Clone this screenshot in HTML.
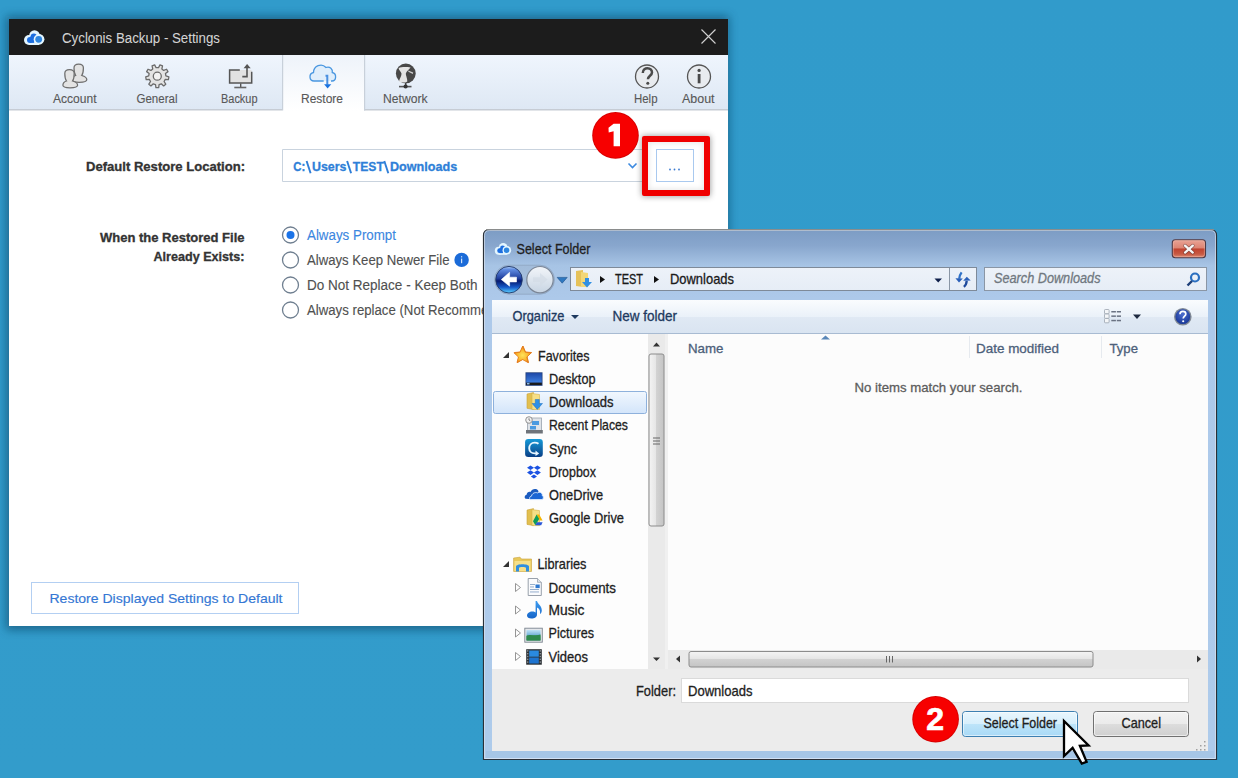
<!DOCTYPE html><html><head><meta charset="utf-8"><style>
html,body{margin:0;padding:0;background:#329ccb;overflow:hidden}
svg{display:block}
text{font-family:"Liberation Sans",sans-serif}
</style></head><body>
<svg width="1238" height="778" viewBox="0 0 1238 778">
<defs>
 <linearGradient id="bg" x1="0" y1="0" x2="0" y2="1">
  <stop offset="0" stop-color="#319bcb"/><stop offset="1" stop-color="#339ccb"/>
 </linearGradient>
 <filter id="shadow" x="-10%" y="-10%" width="120%" height="120%">
  <feGaussianBlur stdDeviation="5"/>
 </filter>
 <filter id="glow" x="-30%" y="-30%" width="160%" height="160%"><feGaussianBlur stdDeviation="0.35"/></filter>
 <filter id="sshadow" x="-30%" y="-30%" width="160%" height="160%">
  <feGaussianBlur stdDeviation="3"/>
 </filter>
 <linearGradient id="tb" x1="0" y1="0" x2="0" y2="1">
  <stop offset="0" stop-color="#eff5fd"/><stop offset="1" stop-color="#dee8f4"/>
 </linearGradient>
 <linearGradient id="tabsel" x1="0" y1="0" x2="0" y2="1">
  <stop offset="0" stop-color="#eef3fa"/><stop offset="1" stop-color="#ffffff"/>
 </linearGradient>
 <linearGradient id="frame" x1="0" y1="0" x2="0" y2="1">
  <stop offset="0" stop-color="#7c9cc4"/><stop offset="0.03" stop-color="#88a6cd"/><stop offset="0.068" stop-color="#a7c4e5"/><stop offset="0.13" stop-color="#adc9ea"/><stop offset="1" stop-color="#aecbeb"/>
 </linearGradient>
 <linearGradient id="dtb" x1="0" y1="0" x2="0" y2="1">
  <stop offset="0" stop-color="#fafcfe"/><stop offset="0.5" stop-color="#eaf1f9"/><stop offset="0.5" stop-color="#e0e9f4"/><stop offset="1" stop-color="#d9e4f1"/>
 </linearGradient>
 <linearGradient id="addr" x1="0" y1="0" x2="0" y2="1">
  <stop offset="0" stop-color="#edf2f9"/><stop offset="1" stop-color="#e6edf6"/>
 </linearGradient>
 <linearGradient id="selrow" x1="0" y1="0" x2="0" y2="1">
  <stop offset="0" stop-color="#f1f7fe"/><stop offset="1" stop-color="#d3e5fa"/>
 </linearGradient>
 <linearGradient id="btnblue" x1="0" y1="0" x2="0" y2="1">
  <stop offset="0" stop-color="#e9f6fd"/><stop offset="0.5" stop-color="#d6effc"/><stop offset="0.5" stop-color="#bde4f9"/><stop offset="1" stop-color="#a8d9f6"/>
 </linearGradient>
 <linearGradient id="btngray" x1="0" y1="0" x2="0" y2="1">
  <stop offset="0" stop-color="#f2f2f2"/><stop offset="0.5" stop-color="#ebebeb"/><stop offset="0.5" stop-color="#dddddd"/><stop offset="1" stop-color="#cfcfcf"/>
 </linearGradient>
 <linearGradient id="hthumb" x1="0" y1="0" x2="0" y2="1">
  <stop offset="0" stop-color="#f4f4f4"/><stop offset="0.45" stop-color="#e6e6e6"/><stop offset="0.5" stop-color="#d2d2d2"/><stop offset="1" stop-color="#c4c4c4"/>
 </linearGradient>
 <linearGradient id="vthumb" x1="0" y1="0" x2="1" y2="0">
  <stop offset="0" stop-color="#f4f4f4"/><stop offset="0.45" stop-color="#e6e6e6"/><stop offset="0.5" stop-color="#d2d2d2"/><stop offset="1" stop-color="#c4c4c4"/>
 </linearGradient>
 <radialGradient id="redball" cx="0.5" cy="0.35" r="0.65">
  <stop offset="0" stop-color="#f20d0d"/><stop offset="1" stop-color="#d40000"/>
 </radialGradient>
 <linearGradient id="closebtn" x1="0" y1="0" x2="0" y2="1">
  <stop offset="0" stop-color="#eaa395"/><stop offset="0.45" stop-color="#dd8574"/><stop offset="0.52" stop-color="#c04330"/><stop offset="0.8" stop-color="#c85a43"/><stop offset="1" stop-color="#e0907a"/>
 </linearGradient>
 <radialGradient id="backball" cx="0.5" cy="0.3" r="0.7">
  <stop offset="0" stop-color="#4f8fe6"/><stop offset="0.6" stop-color="#103f9e"/><stop offset="1" stop-color="#2a8ae6"/>
 </radialGradient>
 <radialGradient id="fwdball" cx="0.5" cy="0.3" r="0.7">
  <stop offset="0" stop-color="#eef3f8"/><stop offset="1" stop-color="#b9c8d8"/>
 </radialGradient>
 <radialGradient id="helpball" cx="0.5" cy="0.35" r="0.6">
  <stop offset="0" stop-color="#4d6fd0"/><stop offset="1" stop-color="#1b3a9a"/>
 </radialGradient>
</defs>
<rect x="0" y="0" width="1238" height="778" fill="url(#bg)"/>

<rect x="6" y="16" width="723" height="614" fill="#0c4466" opacity="0.6" filter="url(#shadow)"/>
<rect x="9" y="19" width="719" height="607" fill="#ffffff"/>
<rect x="9" y="19" width="719" height="36" fill="#1c1c1c"/>
<rect x="9" y="55" width="719" height="54" fill="url(#tb)"/>
<rect x="9" y="109" width="719" height="1.5" fill="#c6ccd4"/>
<rect x="282" y="55" width="82" height="56" fill="url(#tabsel)"/>
<rect x="282" y="55" width="1.2" height="55.5" fill="#c8d0da"/>
<rect x="364" y="55" width="1.2" height="55.5" fill="#c8d0da"/>
<text x="62" y="43" font-size="13.8" fill="#d4d4d4" stroke="#d4d4d4" stroke-width="0.05" textLength="158" lengthAdjust="spacingAndGlyphs">Cyclonis Backup - Settings</text>
<path d="M701.5 29.5 L715.5 43.5 M715.5 29.5 L701.5 43.5" stroke="#cfcfcf" stroke-width="1.15" fill="none"/>
<text x="53" y="102.8" font-size="12" fill="#585858" stroke="#585858" stroke-width="0.12" textLength="43.5" lengthAdjust="spacingAndGlyphs">Account</text>
<text x="136.5" y="102.8" font-size="12" fill="#585858" stroke="#585858" stroke-width="0.12" textLength="41" lengthAdjust="spacingAndGlyphs">General</text>
<text x="221" y="102.8" font-size="12" fill="#585858" stroke="#585858" stroke-width="0.12" textLength="36.5" lengthAdjust="spacingAndGlyphs">Backup</text>
<text x="301" y="102.8" font-size="12" fill="#585858" stroke="#585858" stroke-width="0.12" textLength="42" lengthAdjust="spacingAndGlyphs">Restore</text>
<text x="383" y="102.8" font-size="12" fill="#585858" stroke="#585858" stroke-width="0.12" textLength="44.5" lengthAdjust="spacingAndGlyphs">Network</text>
<text x="634" y="102.8" font-size="12" fill="#585858" stroke="#585858" stroke-width="0.12" textLength="23.5" lengthAdjust="spacingAndGlyphs">Help</text>
<text x="682" y="102.8" font-size="12" fill="#585858" stroke="#585858" stroke-width="0.12" textLength="32.5" lengthAdjust="spacingAndGlyphs">About</text>
<g filter="url(#glow)"><circle cx="29.00" cy="40.00" r="5.00" fill="#e4f6ff"/><circle cx="34.50" cy="35.50" r="5.30" fill="#e4f6ff"/><circle cx="39.00" cy="39.30" r="5.40" fill="#e4f6ff"/><rect x="29.00" y="39.00" width="10.00" height="6.00" fill="#e4f6ff"/><circle cx="30.00" cy="39.90" r="3.00" fill="#1f6ee0"/><circle cx="33.80" cy="36.60" r="3.10" fill="#1f6ee0"/><rect x="30.00" y="36.60" width="4.20" height="6.30" fill="#1f6ee0"/><circle cx="38.70" cy="39.30" r="5.00" fill="#e4f6ff"/><circle cx="38.70" cy="39.30" r="3.40" fill="#2f86e0"/></g>
<path transform="translate(9.2,-5.5)" d="M66.5 81 C65 79 64.8 76 64.8 73.5 C64.8 70.5 67 69.6 69.5 69.6 C72 69.6 74.2 70.5 74.2 73.5 C74.2 76 74 79 72.5 81 C75.5 81.8 77.6 83 77.6 85.3 C77.6 87.2 75 87.8 70 87.8 C65 87.8 62.9 87.2 62.9 85.3 C62.9 83 64 81.8 66.5 81 Z" fill="#e3e3e3" stroke="#6f6f6f" stroke-width="1.25"/>
<path transform="translate(0,0)" d="M66.5 81 C65 79 64.8 76 64.8 73.5 C64.8 70.5 67 69.6 69.5 69.6 C72 69.6 74.2 70.5 74.2 73.5 C74.2 76 74 79 72.5 81 C75.5 81.8 77.6 83 77.6 85.3 C77.6 87.2 75 87.8 70 87.8 C65 87.8 62.9 87.2 62.9 85.3 C62.9 83 64 81.8 66.5 81 Z" fill="#e3e3e3" stroke="#6f6f6f" stroke-width="1.25"/>
<path d="M159.09 84.61 L158.67 87.72 L155.93 87.72 L155.51 84.61 L153.26 83.79 L150.95 85.91 L148.84 84.14 L150.52 81.49 L149.33 79.42 L146.20 79.55 L145.72 76.85 L148.71 75.90 L149.12 73.54 L146.64 71.63 L148.01 69.25 L150.91 70.45 L152.74 68.91 L152.07 65.85 L154.65 64.91 L156.10 67.68 L158.50 67.68 L159.95 64.91 L162.53 65.85 L161.86 68.91 L163.69 70.45 L166.59 69.25 L167.96 71.63 L165.48 73.54 L165.89 75.90 L168.88 76.85 L168.40 79.55 L165.27 79.42 L164.08 81.49 L165.76 84.14 L163.65 85.91 L161.34 83.79 Z" fill="#e3e3e3" stroke="#6b6b6b" stroke-width="1.3" stroke-linejoin="round"/>
<circle cx="157.3" cy="76.2" r="4.0" fill="#f2f2f2" stroke="#6b6b6b" stroke-width="1.3"/>
<rect x="229.6" y="70" width="22" height="13.2" fill="#e2e2e2"/>
<path d="M239.8 70 L229.6 70 L229.6 83.1 L251.7 83.1 L251.7 71.8" fill="none" stroke="#555" stroke-width="1.5"/>
<path d="M242.3 76.6 L247 76.6 L247 67.6" fill="none" stroke="#555" stroke-width="1.6"/>
<path d="M243.6 68.2 L247.1 64 L250.7 68.2 Z" fill="#555"/>
<rect x="240" y="83.5" width="1.4" height="3.6" fill="#555"/><rect x="234.3" y="86.7" width="12" height="1.6" fill="#666"/>
<path d="M323.7 81 L314 81 C309 81 308.5 73.5 313.5 72.5 C313.5 66 321.5 62.5 326 67.5 C330 66 333 69.5 332.3 72.5 C337 73.5 336.5 81 332 81 L331 81" fill="#e0eefb" stroke="#4a97e0" stroke-width="1.3"/>
<path d="M325.5 75.8 L327.3 75.8 L327.3 84.8" fill="none" stroke="#4a90e0" stroke-width="2"/>
<path d="M324.1 84.3 L331.3 84.3 L327.6 88.4 Z" fill="#1a73e0"/>
<circle cx="405.8" cy="73.4" r="9.9" fill="#484848"/>
<path d="M398.6 68.2 C401 67 406 66.8 410.6 67.6 C409.5 69.5 406.5 71 405.8 73.6 C405.6 75.5 407.5 78.5 407.3 81.4 C405 83 401.5 83 399 81.4 C399.5 78.5 401.8 76 401.5 73.6 C401 71.5 399 70.5 398.6 68.2 Z" fill="#e4e4e4"/>
<path d="M408.2 70.4 L413.2 72.6 L412.8 73.9 L408.4 71.7 Z" fill="#cfcfcf"/>
<rect x="404.9" y="83" width="1.6" height="3" fill="#444"/><rect x="399" y="85.8" width="12.5" height="1.6" fill="#555"/><circle cx="405.6" cy="86.5" r="2.1" fill="#333"/>
<circle cx="647" cy="76.5" r="11.5" fill="#e8ebef" stroke="#555" stroke-width="1.3"/>
<path d="M642.8 73 C642.8 69.6 645.6 68.2 647.4 68.2 C650.2 68.2 652 70 652 72.4 C652 75.6 647.9 75.9 647.9 79.3" fill="none" stroke="#4a4a4a" stroke-width="2.5"/>
<circle cx="647.8" cy="83.3" r="1.5" fill="#4a4a4a"/>
<circle cx="699" cy="76.5" r="11.5" fill="#e8ebef" stroke="#555" stroke-width="1.3"/>
<rect x="697.7" y="74" width="2.8" height="9.3" fill="#4a4a4a"/><circle cx="699.1" cy="70.4" r="1.6" fill="#4a4a4a"/>
<text x="86" y="171" font-size="13" fill="#333333" stroke="#333333" stroke-width="0.32" font-weight="bold" textLength="159" lengthAdjust="spacingAndGlyphs">Default Restore Location:</text>
<path d="M642 149.5 H282.5 V181.5 H642" fill="#fff" stroke="#c9d3de"/>
<text x="293.2" y="171" font-size="13" fill="#2f7fd8" stroke="#2f7fd8" stroke-width="0.32" font-weight="bold" textLength="12" lengthAdjust="spacingAndGlyphs">C:</text>
<text x="312" y="171" font-size="13" fill="#2f7fd8" stroke="#2f7fd8" stroke-width="0.32" font-weight="bold" textLength="34.5" lengthAdjust="spacingAndGlyphs">Users</text>
<text x="352.8" y="171" font-size="13" fill="#2f7fd8" stroke="#2f7fd8" stroke-width="0.32" font-weight="bold" textLength="31" lengthAdjust="spacingAndGlyphs">TEST</text>
<text x="390" y="171" font-size="13" fill="#2f7fd8" stroke="#2f7fd8" stroke-width="0.32" font-weight="bold" textLength="67.2" lengthAdjust="spacingAndGlyphs">Downloads</text>
<path d="M306.6 161 L310.6 173.2" stroke="#2f7fd8" stroke-width="1.9"/>
<path d="M347.1 161 L351.1 173.2" stroke="#2f7fd8" stroke-width="1.9"/>
<path d="M384.3 161 L388.3 173.2" stroke="#2f7fd8" stroke-width="1.9"/>
<path d="M628.5 163.5 L632.5 167.5 L636.5 163.5" stroke="#3d8ae0" stroke-width="1.6" fill="none"/>
<rect x="642" y="136" width="68" height="60" fill="#000" fill-opacity="0.32" filter="url(#sshadow)"/>
<rect x="648" y="142" width="56" height="48" fill="#fff"/>
<path d="M642 136 H710 V196 H642 Z M648 142 V190 H704 V142 Z" fill="#000" fill-opacity="0.12" fill-rule="evenodd" filter="url(#sshadow)"/>
<rect x="656.5" y="149.5" width="37" height="32" fill="#fff" stroke="#a9c9ef"/>
<circle cx="670" cy="169.5" r="0.9" fill="#3a7ad0"/><circle cx="674.5" cy="169.5" r="0.9" fill="#3a7ad0"/><circle cx="679" cy="169.5" r="0.9" fill="#3a7ad0"/>
<path d="M644 136 H708 Q710 136 710 138 V194 Q710 196 708 196 H644 Q642 196 642 194 V138 Q642 136 644 136 Z M648 142 V190 H704 V142 Z" fill="#f00000" fill-rule="evenodd"/>
<circle cx="615.5" cy="135.4" r="23.3" fill="#d80000"/>
<circle cx="615.5" cy="135.4" r="22.3" fill="#f70000"/>
<path d="M613.6 123.8 L620 123.8 L620 146.2 L613.6 146.2 L613.6 131.2 L608.7 132.6 L608.5 127.8 Z" fill="#ffffff"/>
<text x="100" y="242" font-size="13" fill="#333333" stroke="#333333" stroke-width="0.32" font-weight="bold" textLength="144.5" lengthAdjust="spacingAndGlyphs">When the Restored File</text>
<text x="153.5" y="261" font-size="13" fill="#333333" stroke="#333333" stroke-width="0.32" font-weight="bold" textLength="91" lengthAdjust="spacingAndGlyphs">Already Exists:</text>
<circle cx="290.5" cy="235" r="8" fill="#fff" stroke="#6f7f90" stroke-width="1.3"/>
<circle cx="290.5" cy="260" r="8" fill="#fff" stroke="#6f7f90" stroke-width="1.3"/>
<circle cx="290.5" cy="285" r="8" fill="#fff" stroke="#6f7f90" stroke-width="1.3"/>
<circle cx="290.5" cy="310" r="8" fill="#fff" stroke="#6f7f90" stroke-width="1.3"/>
<circle cx="290.5" cy="235" r="4" fill="#1a73e8"/>
<text x="307" y="240.2" font-size="13.8" fill="#3b86e0" stroke="#3b86e0" stroke-width="0.12" textLength="89" lengthAdjust="spacingAndGlyphs">Always Prompt</text>
<text x="307" y="265.2" font-size="13.8" fill="#505050" stroke="#505050" stroke-width="0.12" textLength="142.5" lengthAdjust="spacingAndGlyphs">Always Keep Newer File</text>
<circle cx="461.6" cy="259.9" r="7.2" fill="#1b6bd8"/>
<rect x="461" y="258.6" width="1.2" height="4.6" fill="#cfe2fa"/><rect x="461" y="256.2" width="1.2" height="1.2" fill="#cfe2fa"/>
<text x="307" y="290.2" font-size="13.8" fill="#505050" stroke="#505050" stroke-width="0.12" textLength="170.5" lengthAdjust="spacingAndGlyphs">Do Not Replace - Keep Both</text>
<text x="307" y="315.2" font-size="13.8" fill="#505050" stroke="#505050" stroke-width="0.12" textLength="215" lengthAdjust="spacingAndGlyphs">Always replace (Not Recommended)</text>
<rect x="31.5" y="582.5" width="267" height="31" fill="#fff" stroke="#b3cff2"/>
<text x="49.5" y="603" font-size="13.6" fill="#3577d4" stroke="#3577d4" stroke-width="0.15" textLength="233" lengthAdjust="spacingAndGlyphs">Restore Displayed Settings to Default</text>
<path d="M483.5 759.5 L483.5 235.5 Q483.5 229.5 489.5 229.5 L1210.5 229.5 Q1216.5 229.5 1216.5 235.5 L1216.5 759.5 Z" fill="url(#frame)" stroke="#2a3038" stroke-width="1.2"/>
<path d="M484.5 758.5 L484.5 235.5 Q484.5 230.5 489.5 230.5 L1210.5 230.5 Q1215.5 230.5 1215.5 235.5 L1215.5 758.5 Z" fill="none" stroke="#eef4fb" stroke-opacity="0.55" stroke-width="1"/>
<path d="M486 229.6 L1214 229.6" stroke="#8a8c8c" stroke-width="1.3"/>
<rect x="486" y="751" width="728" height="7" fill="#a6c6e6"/>
<g filter="url(#glow)"><circle cx="498.80" cy="250.80" r="4.00" fill="#e4f6ff"/><circle cx="503.20" cy="247.20" r="4.24" fill="#e4f6ff"/><circle cx="506.80" cy="250.24" r="4.32" fill="#e4f6ff"/><rect x="498.80" y="250.00" width="8.00" height="4.80" fill="#e4f6ff"/><circle cx="499.60" cy="250.72" r="2.40" fill="#1f6ee0"/><circle cx="502.64" cy="248.08" r="2.48" fill="#1f6ee0"/><rect x="499.60" y="248.08" width="3.36" height="5.04" fill="#1f6ee0"/><circle cx="506.56" cy="250.24" r="4.00" fill="#e4f6ff"/><circle cx="506.56" cy="250.24" r="2.72" fill="#2f86e0"/></g>
<text x="516.5" y="253.5" font-size="13.8" fill="#1e1e1e" stroke="#1e1e1e" stroke-width="0.3" textLength="74" lengthAdjust="spacingAndGlyphs">Select Folder</text>
<rect x="1172.3" y="239.7" width="33.2" height="18" rx="3" fill="url(#closebtn)" stroke="#4e3a46" stroke-width="1.1"/>
<rect x="1173.4" y="240.8" width="31" height="15.8" rx="2" fill="none" stroke="#f3c0b4" stroke-opacity="0.55" stroke-width="0.8"/>
<path d="M1185 245.6 L1192.8 252.6 M1192.8 245.6 L1185 252.6" stroke="#4a2a2a" stroke-width="3.6" stroke-opacity="0.55" stroke-linecap="round"/>
<path d="M1185 245.6 L1192.8 252.6 M1192.8 245.6 L1185 252.6" stroke="#f6f6f6" stroke-width="2.3" stroke-linecap="round"/>
<linearGradient id="backg" x1="0" y1="0" x2="0" y2="1"><stop offset="0" stop-color="#a9c8f4"/><stop offset="0.12" stop-color="#5f8ae0"/><stop offset="0.45" stop-color="#21409e"/><stop offset="0.55" stop-color="#061a70"/><stop offset="0.78" stop-color="#1659c8"/><stop offset="1" stop-color="#5fd4ff"/></linearGradient>
<linearGradient id="fwdg" x1="0" y1="0" x2="0" y2="1"><stop offset="0" stop-color="#f2f5f9"/><stop offset="0.5" stop-color="#dde5ee"/><stop offset="1" stop-color="#c8d5e3"/></linearGradient>
<path d="M509 265.2 L540 265.2 A14.5 14.5 0 0 1 540 294.2 L509 294.2 A14.5 14.5 0 0 1 509 265.2 Z" fill="#9fb6d1" fill-opacity="0.55" stroke="#8aa0ba" stroke-opacity="0.7"/>
<circle cx="509" cy="279.7" r="13.3" fill="url(#backg)" stroke="#1f3766" stroke-width="0.9"/>
<path d="M501.3 279.6 L509.6 272.3 L509.6 277.2 L516.5 277.2 L516.5 281.9 L509.6 281.9 L509.6 286.2 Z" fill="#ffffff" stroke="#ffffff" stroke-width="0.6" stroke-linejoin="round"/>
<circle cx="540" cy="279.7" r="13.2" fill="url(#fwdg)" stroke="#7b8696" stroke-width="1.2"/>
<path d="M547.5 279.6 L540 273 L540 277.2 L533 277.2 L533 281.9 L540 281.9 L540 286.2 Z" fill="#d3dce6" fill-opacity="0.7"/>
<path d="M557.2 277.4 L567.2 277.4 L562.2 283.2 Z" fill="#2f78c0" stroke="#1d4f8a" stroke-width="0.6" stroke-linejoin="round"/>
<rect x="570.5" y="267.5" width="406" height="23" fill="url(#addr)" stroke="#7e8a99"/>
<rect x="949" y="268" width="1" height="22" fill="#8a96a5"/>
<path d="M576 271 L583 270 L583 287 L576 286 Z" fill="#e6c25a"/><path d="M581 272 L588 273 L588 287 L581 287 Z" fill="#f3d777"/><path d="M585 278 L589 278 L589 282 L592 282 L587 287.5 L582 282 L585 282 Z" fill="#2f8fe3"/>
<path d="M600 276 L605 279.5 L600 283 Z" fill="#111"/>
<text x="615" y="283.5" font-size="13.9" fill="#1a1a1a" stroke="#1a1a1a" stroke-width="0.3" textLength="28" lengthAdjust="spacingAndGlyphs">TEST</text>
<path d="M654 276 L659 279.5 L654 283 Z" fill="#111"/>
<text x="670" y="283.5" font-size="13.9" fill="#1a1a1a" stroke="#1a1a1a" stroke-width="0.3" textLength="64" lengthAdjust="spacingAndGlyphs">Downloads</text>
<path d="M934.5 278.5 L942 278.5 L938.2 282.5 Z" fill="#0e1f4a"/>
<path d="M961.6 272.4 C960.2 274.3 959.3 276.3 959.2 278.8" stroke="#2f72c8" stroke-width="2.3" fill="none"/>
<path d="M955.4 278.2 L962.8 278.4 L959 282.6 Z" fill="#2a5fb8"/>
<path d="M966.7 280.8 C966.6 283.3 965.6 285.4 963.9 286.8" stroke="#1f4a9c" stroke-width="2.3" fill="none"/>
<path d="M963.2 280.7 L970.7 280.6 L966.8 276.8 Z" fill="#2a5fb8"/>
<rect x="984.5" y="267.5" width="222" height="23" fill="url(#addr)" stroke="#8a96a5"/>
<text x="994" y="283" font-size="13.9" fill="#707880" stroke="#707880" stroke-width="0.3" font-style="italic" textLength="106.5" lengthAdjust="spacingAndGlyphs">Search Downloads</text>
<circle cx="1195" cy="277.5" r="4" fill="none" stroke="#2a6fc0" stroke-width="2.2"/><path d="M1192 281 L1187.5 285.5" stroke="#1d3f78" stroke-width="2.4"/>
<rect x="492" y="300" width="716" height="34" fill="url(#dtb)"/>
<rect x="492" y="333" width="716" height="1" fill="#a8bbd2"/>
<text x="512.5" y="321" font-size="13.9" fill="#1e3a5f" stroke="#1e3a5f" stroke-width="0.3" textLength="52" lengthAdjust="spacingAndGlyphs">Organize</text>
<path d="M571 315 L579 315 L575 319 Z" fill="#1e3a5f"/>
<text x="612.5" y="321" font-size="13.9" fill="#1e3a5f" stroke="#1e3a5f" stroke-width="0.3" textLength="64.5" lengthAdjust="spacingAndGlyphs">New folder</text>
<rect x="1104.5" y="309.5" width="4.6" height="4.3" rx="0.8" fill="#f4f6f8" stroke="#9aa3ae" stroke-width="0.8"/>
<rect x="1104.5" y="314" width="4.6" height="4.3" rx="0.8" fill="#f4f6f8" stroke="#9aa3ae" stroke-width="0.8"/>
<rect x="1104.5" y="318.5" width="4.6" height="4.3" rx="0.8" fill="#f4f6f8" stroke="#9aa3ae" stroke-width="0.8"/>
<rect x="1111.3" y="311.0" width="4.6" height="1.5" fill="#6a7282"/><rect x="1116.8" y="311.0" width="4.2" height="1.5" fill="#6a7282"/>
<rect x="1111.3" y="315.4" width="4.6" height="1.5" fill="#6a7282"/><rect x="1116.8" y="315.4" width="4.2" height="1.5" fill="#6a7282"/>
<rect x="1111.3" y="319.8" width="4.6" height="1.5" fill="#6a7282"/><rect x="1116.8" y="319.8" width="4.2" height="1.5" fill="#6a7282"/>
<path d="M1133 314.4 L1141 314.4 L1137 319 Z" fill="#1e2a40"/>
<circle cx="1182.8" cy="316.7" r="8.8" fill="#7f8894"/>
<circle cx="1182.8" cy="316.7" r="7.4" fill="url(#helpball)"/>
<path d="M1180 314.2 C1180 312.2 1181.4 311.3 1182.9 311.3 C1184.6 311.3 1185.8 312.4 1185.8 313.9 C1185.8 316 1183.2 316.2 1183.2 318.6" fill="none" stroke="#fff" stroke-width="1.7"/>
<circle cx="1183.2" cy="321.2" r="1.05" fill="#fff"/>
<rect x="492" y="334" width="716" height="335" fill="#ffffff"/>
<rect x="492" y="334" width="156" height="335" fill="#fdfdfd"/>
<rect x="648" y="334" width="17" height="335" fill="#eaeaea"/>
<rect x="649" y="354" width="15" height="172" rx="2" fill="url(#vthumb)" stroke="#8c8c8c" stroke-width="1"/>
<rect x="653" y="437.5" width="7" height="1" fill="#666"/>
<rect x="653" y="440.5" width="7" height="1" fill="#666"/>
<rect x="653" y="443.5" width="7" height="1" fill="#666"/>
<path d="M653 346.5 L660 346.5 L656.5 342.5 Z" fill="#333"/>
<path d="M653 657.5 L660 657.5 L656.5 661 Z" fill="#333"/>
<rect x="665" y="334" width="3" height="335" fill="#f0f0f0"/>
<rect x="668" y="334" width="540" height="335" fill="#fcfcfc"/>
<text x="688" y="352.8" font-size="13.6" fill="#4c607a" stroke="#4c607a" stroke-width="0.3" textLength="35.5" lengthAdjust="spacingAndGlyphs">Name</text>
<path d="M821 339.5 L825.5 335.5 L830 339.5 Z" fill="#5a87b8"/>
<rect x="969" y="336" width="1" height="22" fill="#e6eaef"/><rect x="1101" y="336" width="1" height="22" fill="#e6eaef"/>
<text x="976" y="352.8" font-size="13.6" fill="#4c607a" stroke="#4c607a" stroke-width="0.3" textLength="83" lengthAdjust="spacingAndGlyphs">Date modified</text>
<text x="1109.5" y="352.8" font-size="13.6" fill="#4c607a" stroke="#4c607a" stroke-width="0.3" textLength="28.5" lengthAdjust="spacingAndGlyphs">Type</text>
<text x="854.5" y="391.5" font-size="13.6" fill="#5d5d5d" stroke="#5d5d5d" stroke-width="0.3" textLength="168" lengthAdjust="spacingAndGlyphs">No items match your search.</text>
<rect x="668" y="650" width="540" height="19" fill="#eaeaea"/>
<rect x="689" y="651.5" width="404" height="15.5" rx="2" fill="url(#hthumb)" stroke="#8c8c8c" stroke-width="1"/>
<rect x="886" y="656" width="1" height="6.5" fill="#666"/>
<rect x="889" y="656" width="1" height="6.5" fill="#666"/>
<rect x="892" y="656" width="1" height="6.5" fill="#666"/>
<path d="M680 655.5 L680 662.5 L676 659 Z" fill="#333"/>
<path d="M1197 655.5 L1197 662.5 L1201 659 Z" fill="#333"/>
<text x="538" y="361" font-size="13.9" fill="#1e1e1e" stroke="#1e1e1e" stroke-width="0.3" textLength="51.5" lengthAdjust="spacingAndGlyphs">Favorites</text>
<path d="M503 358 L509 352 L509 358 Z" fill="#333"/>
<path d="M523 346 L525.5 352 L531.5 352.5 L527 356.5 L528.5 362.5 L523 359 L517.5 362.5 L519 356.5 L514.5 352.5 L520.5 352 Z" fill="#f7b733" stroke="#e07a18" stroke-width="0.9"/>
<rect x="493.5" y="391.5" width="153" height="22" rx="2" fill="url(#selrow)" stroke="#8eb1dc"/>
<text x="549" y="383.5" font-size="13.9" fill="#1e1e1e" stroke="#1e1e1e" stroke-width="0.3" textLength="46.5" lengthAdjust="spacingAndGlyphs">Desktop</text>
<text x="549" y="407" font-size="13.9" fill="#1e1e1e" stroke="#1e1e1e" stroke-width="0.3" textLength="64.5" lengthAdjust="spacingAndGlyphs">Downloads</text>
<text x="549" y="430" font-size="13.9" fill="#1e1e1e" stroke="#1e1e1e" stroke-width="0.3" textLength="79" lengthAdjust="spacingAndGlyphs">Recent Places</text>
<text x="549" y="453.5" font-size="13.9" fill="#1e1e1e" stroke="#1e1e1e" stroke-width="0.3" textLength="28" lengthAdjust="spacingAndGlyphs">Sync</text>
<text x="549" y="476.5" font-size="13.9" fill="#1e1e1e" stroke="#1e1e1e" stroke-width="0.3" textLength="47" lengthAdjust="spacingAndGlyphs">Dropbox</text>
<text x="549" y="499.5" font-size="13.9" fill="#1e1e1e" stroke="#1e1e1e" stroke-width="0.3" textLength="54" lengthAdjust="spacingAndGlyphs">OneDrive</text>
<text x="549" y="522.5" font-size="13.9" fill="#1e1e1e" stroke="#1e1e1e" stroke-width="0.3" textLength="75" lengthAdjust="spacingAndGlyphs">Google Drive</text>
<text x="537.5" y="569" font-size="13.9" fill="#1e1e1e" stroke="#1e1e1e" stroke-width="0.3" textLength="49" lengthAdjust="spacingAndGlyphs">Libraries</text>
<path d="M503 567 L509 561 L509 567 Z" fill="#333"/>
<text x="548.5" y="592.5" font-size="13.9" fill="#1e1e1e" stroke="#1e1e1e" stroke-width="0.3" textLength="67.5" lengthAdjust="spacingAndGlyphs">Documents</text>
<path d="M515.5 583.5 L520.5 587.5 L515.5 591.5 Z" fill="none" stroke="#8a8a8a" stroke-width="0.9"/>
<text x="548.5" y="615" font-size="13.9" fill="#1e1e1e" stroke="#1e1e1e" stroke-width="0.3" textLength="36" lengthAdjust="spacingAndGlyphs">Music</text>
<path d="M515.5 606 L520.5 610 L515.5 614 Z" fill="none" stroke="#8a8a8a" stroke-width="0.9"/>
<text x="548.5" y="638" font-size="13.9" fill="#1e1e1e" stroke="#1e1e1e" stroke-width="0.3" textLength="45.5" lengthAdjust="spacingAndGlyphs">Pictures</text>
<path d="M515.5 629 L520.5 633 L515.5 637 Z" fill="none" stroke="#8a8a8a" stroke-width="0.9"/>
<text x="548.5" y="661.5" font-size="13.9" fill="#1e1e1e" stroke="#1e1e1e" stroke-width="0.3" textLength="39.5" lengthAdjust="spacingAndGlyphs">Videos</text>
<path d="M515.5 652.5 L520.5 656.5 L515.5 660.5 Z" fill="none" stroke="#8a8a8a" stroke-width="0.9"/>
<radialGradient id="starg" cx="0.5" cy="0.55" r="0.55"><stop offset="0" stop-color="#ffe35a"/><stop offset="0.6" stop-color="#f9b52d"/><stop offset="1" stop-color="#e8741a"/></radialGradient>
<path d="M522.6 346.3 L525.3 352.3 L531.3 352.8 L526.8 357 L528.2 362.6 L522.6 359.6 L517 362.6 L518.4 357 L513.9 352.8 L519.9 352.3 Z" fill="url(#starg)" stroke="#e27a1c" stroke-width="0.8" stroke-linejoin="round"/>
<linearGradient id="deskg" x1="0" y1="0" x2="0" y2="1"><stop offset="0" stop-color="#1e49a8"/><stop offset="1" stop-color="#3d7fe0"/></linearGradient>
<rect x="525.5" y="372.3" width="17" height="13.5" fill="#24407a"/><rect x="526.3" y="373.1" width="15.4" height="9.6" fill="url(#deskg)"/><rect x="526.3" y="382.7" width="15.4" height="2.3" fill="#1a1a1a"/><rect x="527" y="382.9" width="2.5" height="1.6" fill="#8ab8e8"/>
<path d="M527 394.0 L533.5 392.5 L533.5 409.5 L527 408.3 Z" fill="#e2bf4f" stroke="#c9a23a" stroke-width="0.6"/><path d="M532 393.5 L539.5 394.5 L539.5 409.5 L532 409.5 Z" fill="#f6df86" stroke="#d5b24a" stroke-width="0.6"/>
<path d="M535.3 399.5 L539.3 399.5 L539.3 403.5 L542.5 403.5 L537.3 409.4 L532.1 403.5 L535.3 403.5 Z" fill="#2e90e6" stroke="#1c6fc0" stroke-width="0.5"/>
<rect x="527.5" y="418" width="14" height="13" fill="#dfe3e8" stroke="#9aa3ad" stroke-width="0.8"/>
<rect x="526" y="430" width="16.8" height="3.5" fill="#6f747a"/>
<rect x="532" y="421" width="7" height="4" fill="#4a9ae0"/><rect x="530" y="426" width="6" height="3.5" fill="#4a9ae0"/>
<circle cx="529" cy="420" r="3.3" fill="#f0f0f0" stroke="#888" stroke-width="0.9"/><path d="M529 418.3 L529 420 L530.3 420.8" stroke="#555" stroke-width="0.7" fill="none"/>
<linearGradient id="syncg" x1="0" y1="0" x2="0" y2="1"><stop offset="0" stop-color="#159ad8"/><stop offset="1" stop-color="#0a3f86"/></linearGradient>
<rect x="525.1" y="439" width="17.7" height="18" rx="3.2" fill="url(#syncg)"/>
<path d="M538.5 443.8 C537.5 443 536.3 442.6 534.6 442.6 C531.4 442.6 529.2 445.2 529.2 448.2 C529.2 451.2 531.5 453.4 534.6 453.4 L536 453.4" stroke="#e8f6ff" stroke-width="1.9" fill="none"/>
<path d="M535.5 450.6 L539.2 453.4 L535.5 456 Z" fill="#e8f6ff"/>
<path d="M527.0 467.7 L530.5 465.4 L534.0 467.7 L530.5 470.0 Z M533.9 467.7 L537.4 465.4 L540.9 467.7 L537.4 470.0 Z M527.0 472.6 L530.5 470.3 L534.0 472.6 L530.5 474.90000000000003 Z M533.9 472.6 L537.4 470.3 L540.9 472.6 L537.4 474.90000000000003 Z M530.8 476.6 L533.9 474.6 L537.0 476.6 L533.9 478.6 Z " fill="#1b52e2"/>
<path d="M525.5 498.8 C524.2 498 524.4 495.3 526.6 494.8 C526.9 492.4 528.6 491.4 530.6 491.9 C531.6 488.9 536.2 488 538.1 490.6 C538.4 491.1 538.5 491.6 538.5 492.1 L532 499.2 Z" fill="#1b5bbf"/>
<path d="M530.6 499.6 C529.1 499.3 529.2 496.4 531.5 496.1 C532 493.3 535.1 491.9 537.6 492.9 C539.6 491.3 542.7 492.9 542.4 495.8 C543.8 496.3 543.7 499.4 542.1 499.6 Z" fill="#1b66d4" stroke="#dfeeff" stroke-width="0.9"/>
<path d="M527 510.1 L533.5 508.6 L533.5 525.6 L527 524.4 Z" fill="#e2bf4f" stroke="#c9a23a" stroke-width="0.6"/><path d="M532 509.6 L539.5 510.6 L539.5 525.6 L532 525.6 Z" fill="#f6df86" stroke="#d5b24a" stroke-width="0.6"/>
<path d="M536.6 514.5 L539.2 514.5 L542.6 520.6 L540 520.6 Z" fill="#f4b400"/><path d="M536.6 514.5 L539.2 519 L535.4 525.3 L533 521.2 Z" fill="#0f9d58"/><path d="M535.4 525.3 L536.8 522.3 L542.6 522.3 L541.2 525.3 Z" fill="#2a57d8"/>
<path d="M513.6 558 L520 557.2 L521.5 559 L531.5 559 L531.5 571.4 L513.6 571.4 Z" fill="#e8c85a" stroke="#c9a23a" stroke-width="0.6"/>
<path d="M514.5 561 L530.5 561 L530.5 571 L514.5 571 Z" fill="#f6e08a"/>
<path d="M516 571.4 L516 566.5 C516 563.5 529 563.5 529 566.5 L529 571.4 L526 571.4 L526 568 C526 566.6 519 566.6 519 568 L519 571.4 Z" fill="#2f8fe0"/>
<path d="M528.2 578.5 L537.5 578.5 L541.3 582.3 L541.3 595.5 L528.2 595.5 Z" fill="#fafbfd" stroke="#8d96a3" stroke-width="0.9"/>
<path d="M537.5 578.5 L537.5 582.3 L541.3 582.3" fill="#dfe5ec" stroke="#8d96a3" stroke-width="0.7"/>
<rect x="530" y="584" width="5" height="0.9" fill="#8aa6c8"/><rect x="530" y="586.5" width="4" height="0.9" fill="#8aa6c8"/><rect x="530" y="589" width="9" height="0.9" fill="#8aa6c8"/><rect x="530" y="591.5" width="9" height="0.9" fill="#8aa6c8"/>
<rect x="535.5" y="584.5" width="4.2" height="3.6" fill="#2d78d0"/>
<linearGradient id="musg" x1="0" y1="0" x2="0" y2="1"><stop offset="0" stop-color="#3c9cf0"/><stop offset="1" stop-color="#1564c8"/></linearGradient>
<path d="M535.6 601 L537 601 C537.5 604 541.8 605.5 541.8 610.5 C541.8 612 541 613.5 540 614 C540.5 611 539.5 608.5 537 607.5 L537 614.5 C537 617 534.5 618.6 531.5 618.6 C528.8 618.6 527 617.3 527 615.5 C527 613.2 529.5 611.5 532.3 611.5 C533.8 611.5 535 612 535.6 612.6 Z" fill="url(#musg)"/>
<rect x="524.8" y="628.2" width="17.5" height="14" fill="#e4e7eb" stroke="#7c858f" stroke-width="0.9"/>
<linearGradient id="picg" x1="0" y1="0" x2="0" y2="1"><stop offset="0" stop-color="#bfe3f7"/><stop offset="0.5" stop-color="#72b0d8"/><stop offset="0.55" stop-color="#3a9a5a"/><stop offset="1" stop-color="#1d6a55"/></linearGradient>
<rect x="526.5" y="630" width="14" height="10.5" fill="url(#picg)"/>
<path d="M526.5 636 C530 633.5 535 636.5 540.5 634.5 L540.5 640.5 L526.5 640.5 Z" fill="#2e8a4e"/>
<rect x="526.2" y="649.2" width="15.6" height="15.5" fill="#2a2f33"/>
<rect x="529.2" y="650.5" width="9.6" height="6.2" fill="#2a8ae0"/><rect x="529.2" y="657.5" width="9.6" height="6" fill="#1e74d0"/>
<rect x="527" y="650.2" width="1.4" height="1.4" fill="#8a9095"/><rect x="539.6" y="650.2" width="1.4" height="1.4" fill="#8a9095"/>
<rect x="527" y="653" width="1.4" height="1.4" fill="#8a9095"/><rect x="539.6" y="653" width="1.4" height="1.4" fill="#8a9095"/>
<rect x="527" y="655.8" width="1.4" height="1.4" fill="#8a9095"/><rect x="539.6" y="655.8" width="1.4" height="1.4" fill="#8a9095"/>
<rect x="527" y="658.6" width="1.4" height="1.4" fill="#8a9095"/><rect x="539.6" y="658.6" width="1.4" height="1.4" fill="#8a9095"/>
<rect x="527" y="661.4" width="1.4" height="1.4" fill="#8a9095"/><rect x="539.6" y="661.4" width="1.4" height="1.4" fill="#8a9095"/>
<rect x="492" y="669" width="716" height="82" fill="#ececec"/>
<text x="636" y="696" font-size="13.9" fill="#1e1e1e" stroke="#1e1e1e" stroke-width="0.3" textLength="40" lengthAdjust="spacingAndGlyphs">Folder:</text>
<rect x="681.5" y="678.5" width="507" height="24" fill="#fff" stroke="#dadada"/>
<text x="688" y="695.5" font-size="13.9" fill="#1e1e1e" stroke="#1e1e1e" stroke-width="0.3" textLength="64.5" lengthAdjust="spacingAndGlyphs">Downloads</text>
<rect x="962.5" y="711.5" width="115" height="25" rx="3" fill="url(#btnblue)" stroke="#3c7fb1"/>
<rect x="963.5" y="712.5" width="113" height="23" rx="2" fill="none" stroke="#fff" stroke-opacity="0.55"/>
<text x="983.5" y="728" font-size="13.9" fill="#1e1e1e" stroke="#1e1e1e" stroke-width="0.3" textLength="73.5" lengthAdjust="spacingAndGlyphs">Select Folder</text>
<rect x="1093.5" y="711.5" width="95" height="25" rx="3" fill="url(#btngray)" stroke="#707070"/>
<rect x="1094.5" y="712.5" width="93" height="23" rx="2" fill="none" stroke="#fff" stroke-opacity="0.6"/>
<text x="1121.5" y="728" font-size="13.9" fill="#1e1e1e" stroke="#1e1e1e" stroke-width="0.3" textLength="39.5" lengthAdjust="spacingAndGlyphs">Cancel</text>
<rect x="1204" y="741" width="1.5" height="1.5" fill="#a0a0a0"/>
<rect x="1204" y="745" width="1.5" height="1.5" fill="#a0a0a0"/>
<rect x="1204" y="749" width="1.5" height="1.5" fill="#a0a0a0"/>
<rect x="1200" y="745" width="1.5" height="1.5" fill="#a0a0a0"/>
<rect x="1200" y="749" width="1.5" height="1.5" fill="#a0a0a0"/>
<rect x="1196" y="749" width="1.5" height="1.5" fill="#a0a0a0"/>
<circle cx="935.6" cy="719.2" r="23.3" fill="#d80000"/>
<circle cx="935.6" cy="719.2" r="22.3" fill="#f70000"/>
<text x="926.3" y="730.2" font-size="32" fill="#ffffff" stroke="#ffffff" stroke-width="0.7" font-weight="bold" textLength="17.8" lengthAdjust="spacingAndGlyphs">2</text>
<path d="M1064 721 L1064 756 L1072.6 747.8 L1081.8 763.6 L1086.6 761.8 L1079.9 745.8 L1088.6 745.5 Z" fill="#fff" stroke="#000" stroke-width="2.3" stroke-linejoin="miter"/>
</svg></body></html>
